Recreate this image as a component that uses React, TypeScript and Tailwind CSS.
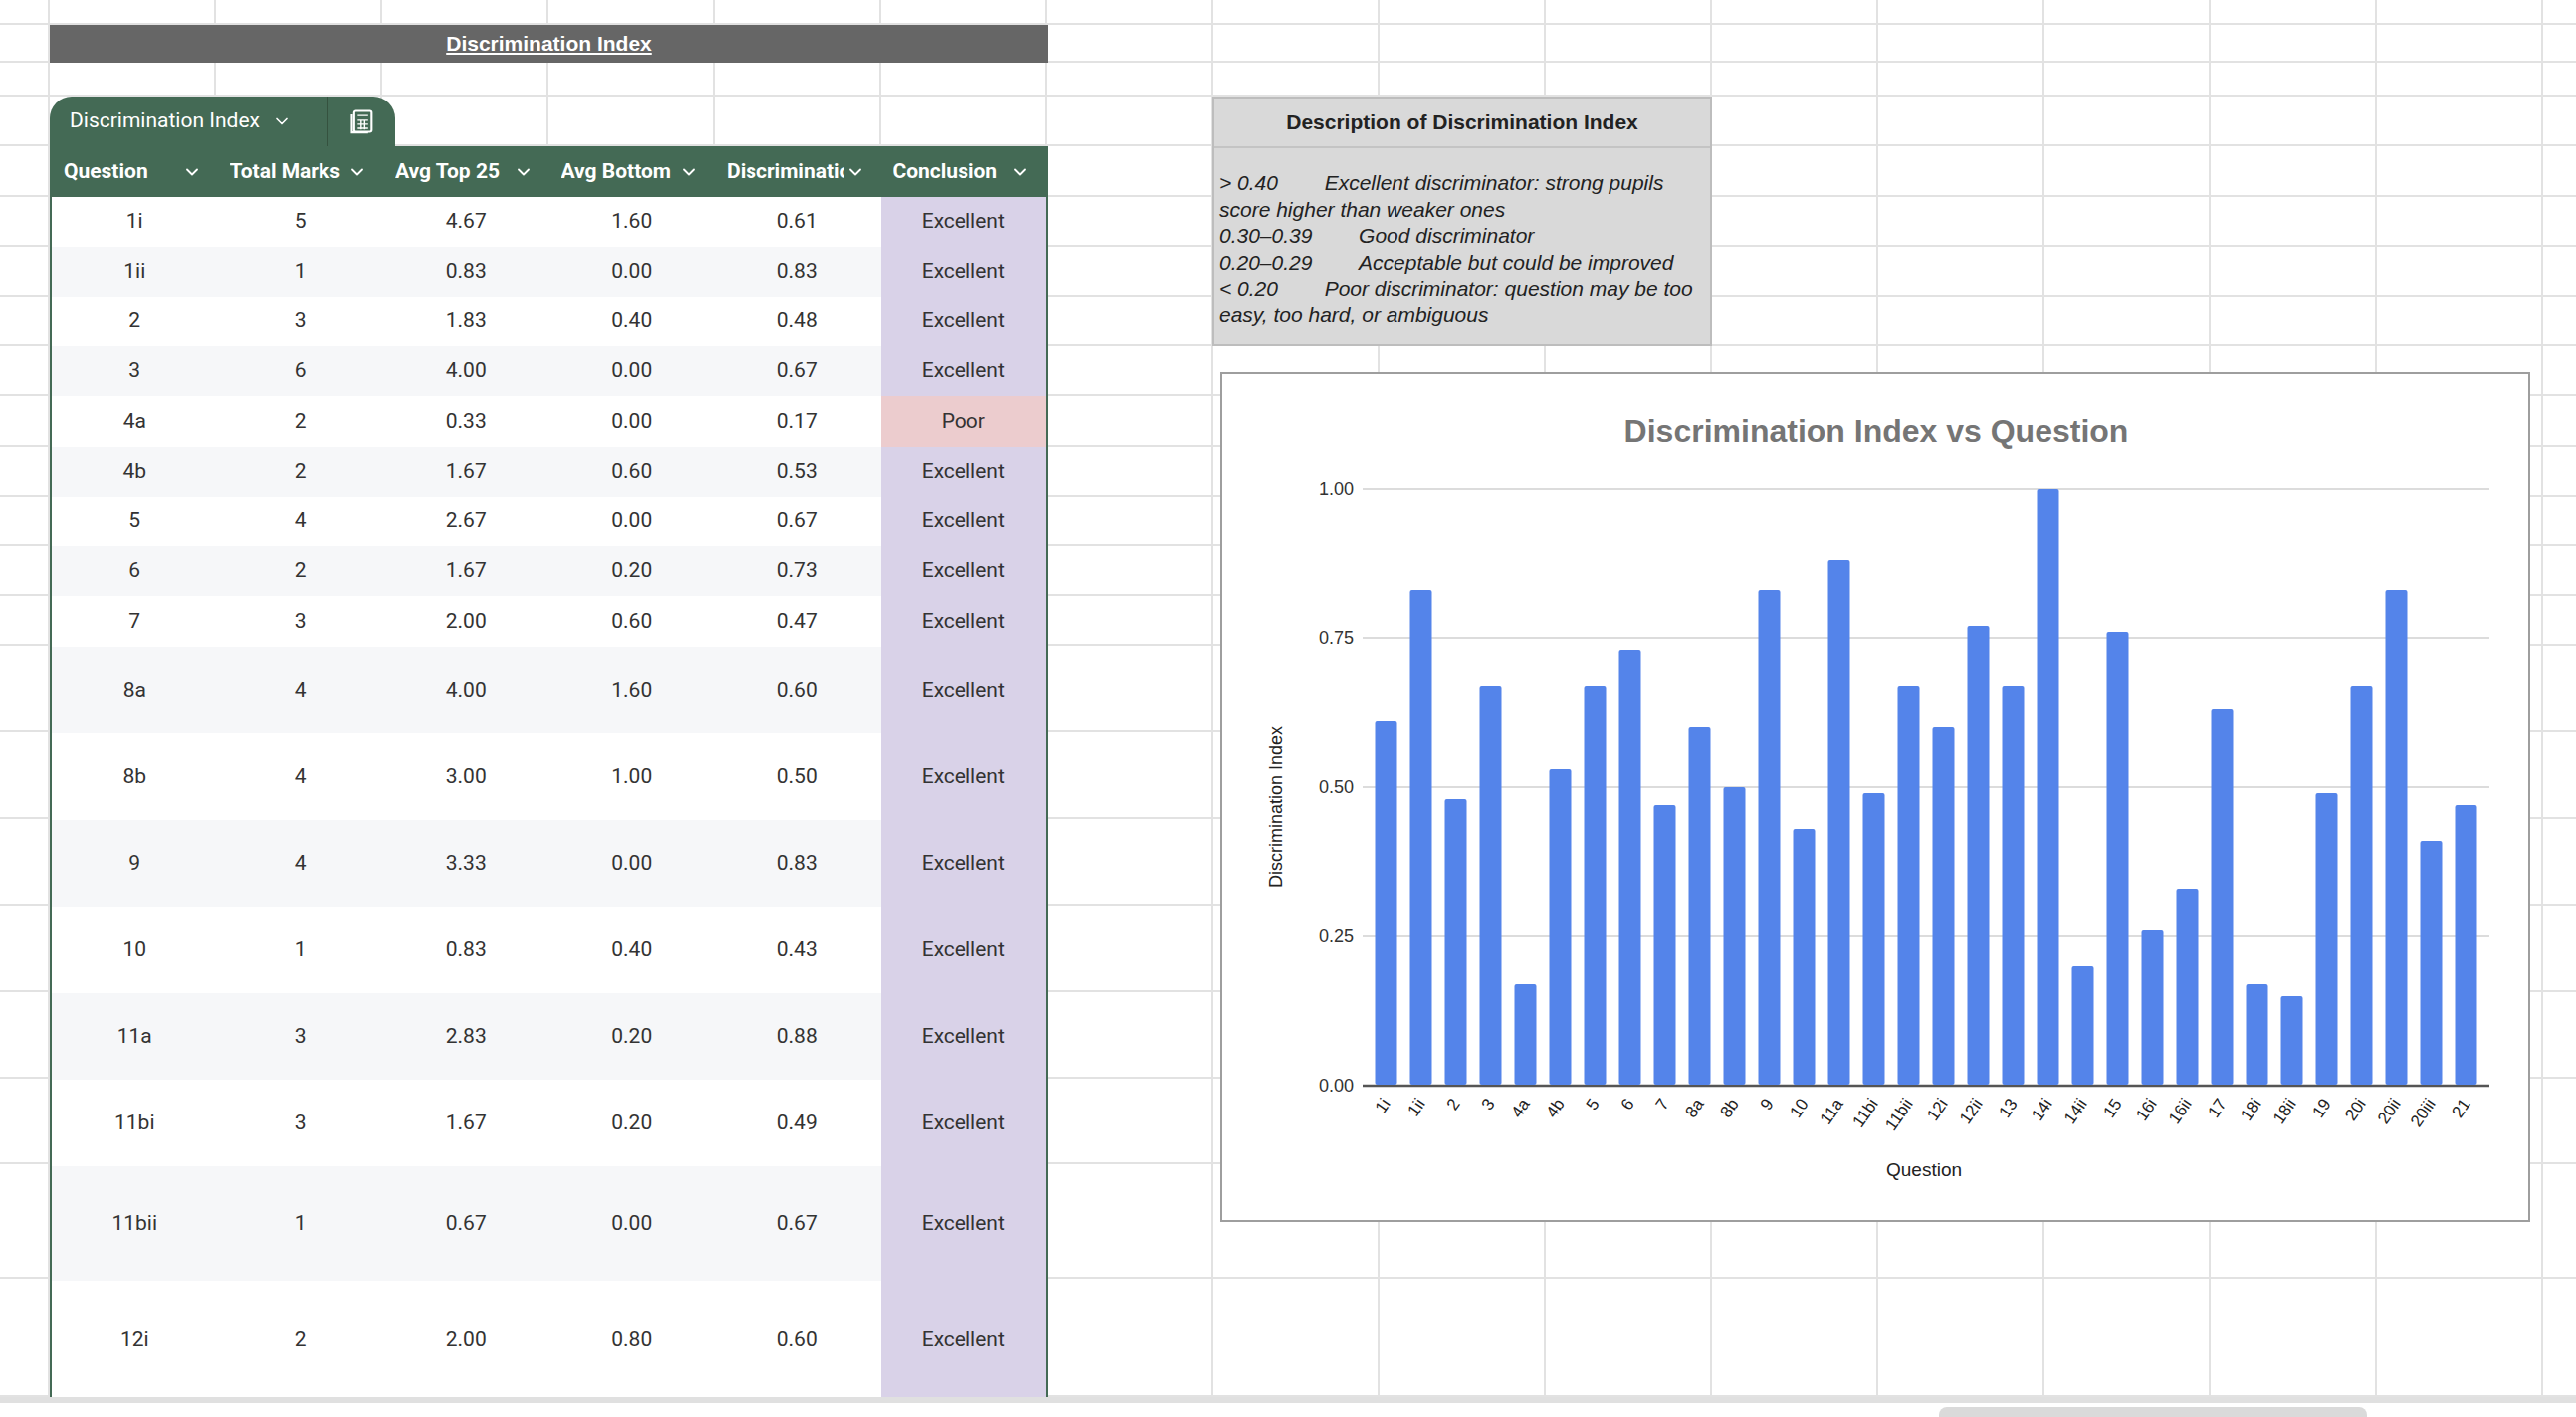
import { ChevronDown } from "lucide-react";

const ROW_TOPS = [0, 25, 63, 97, 147, 198, 248, 298, 348, 398, 449, 499, 549, 599, 649, 736, 823, 910, 997, 1084, 1170, 1285, 1404];

const rows = [
  ["1i", "5", "4.67", "1.60", "0.61", "Excellent", 50],
  ["1ii", "1", "0.83", "0.00", "0.83", "Excellent", 50],
  ["2", "3", "1.83", "0.40", "0.48", "Excellent", 50],
  ["3", "6", "4.00", "0.00", "0.67", "Excellent", 50],
  ["4a", "2", "0.33", "0.00", "0.17", "Poor", 51],
  ["4b", "2", "1.67", "0.60", "0.53", "Excellent", 50],
  ["5", "4", "2.67", "0.00", "0.67", "Excellent", 50],
  ["6", "2", "1.67", "0.20", "0.73", "Excellent", 50],
  ["7", "3", "2.00", "0.60", "0.47", "Excellent", 51],
  ["8a", "4", "4.00", "1.60", "0.60", "Excellent", 87],
  ["8b", "4", "3.00", "1.00", "0.50", "Excellent", 87],
  ["9", "4", "3.33", "0.00", "0.83", "Excellent", 87],
  ["10", "1", "0.83", "0.40", "0.43", "Excellent", 87],
  ["11a", "3", "2.83", "0.20", "0.88", "Excellent", 87],
  ["11bi", "3", "1.67", "0.20", "0.49", "Excellent", 87],
  ["11bii", "1", "0.67", "0.00", "0.67", "Excellent", 115],
  ["12i", "2", "2.00", "0.80", "0.60", "Excellent", 120],
] as const;

const headers = ["Question", "Total Marks", "Avg Top 25", "Avg Bottom", "Discrimination", "Conclusion"];

const chartData: [string, number][] = [
  ["1i", 0.61], ["1ii", 0.83], ["2", 0.48], ["3", 0.67], ["4a", 0.17], ["4b", 0.53], ["5", 0.67], ["6", 0.73],
  ["7", 0.47], ["8a", 0.6], ["8b", 0.5], ["9", 0.83], ["10", 0.43], ["11a", 0.88], ["11bi", 0.49], ["11bii", 0.67],
  ["12i", 0.6], ["12ii", 0.77], ["13", 0.67], ["14i", 1.0], ["14ii", 0.2], ["15", 0.76], ["16i", 0.26], ["16ii", 0.33],
  ["17", 0.63], ["18i", 0.17], ["18ii", 0.15], ["19", 0.49], ["20i", 0.67], ["20ii", 0.83], ["20iii", 0.41], ["21", 0.47],
];

function SheetGrid() {
  const heights = ROW_TOPS.slice(1).map((t, i) => t - ROW_TOPS[i]);
  return (
    <>
      <div className="absolute inset-0 flex flex-col">
        {heights.map((h, i) => (
          <div key={i} className="shrink-0 border-b-2 border-[#e2e2e2]" style={{ height: h }} />
        ))}
      </div>
      <div className="absolute left-0 right-0 top-0 h-[1404px] flex">
        <div className="w-[50px] shrink-0 border-r-2 border-[#e2e2e2]" />
        {Array.from({ length: 15 }).map((_, i) => (
          <div key={i} className="w-[167px] shrink-0 border-r-2 border-[#e2e2e2]" />
        ))}
      </div>
    </>
  );
}

function TableIcon() {
  return (
    <svg width="28" height="28" viewBox="0 0 24 24" fill="none" stroke="white" strokeWidth="1.8">
      <rect x="5" y="3" width="15" height="18" rx="1.5" />
      <path d="M3 6v15.5h14" />
      <path d="M8 7h9M8 11h9M8 14.5h9M8 18h9M11 11v8M14 11v8" strokeWidth="1.2" />
    </svg>
  );
}

function DataTable() {
  return (
    <div className="mt-[34px] w-[1003px]">
      <div className="flex h-[50px] w-[347px] rounded-t-[22px] bg-[#446a55] text-white">
        <div className="flex items-center gap-3 pl-5 w-[280px] border-r border-[#35523f] text-[21px]">
          Discrimination Index
          <ChevronDown className="h-5 w-5" strokeWidth={2} />
        </div>
        <div className="flex flex-1 items-center justify-center">
          <TableIcon />
        </div>
      </div>
      <div className="border-x-2 border-[#446a55]">
        <div className="grid grid-cols-6 h-[51px] bg-[#446a55] text-white font-bold text-[21px]">
          {headers.map((h) => (
            <div key={h} className="flex items-center justify-between pl-3 pr-4 overflow-hidden">
              <span className="whitespace-nowrap overflow-hidden max-w-[118px]">{h}</span>
              <ChevronDown className="h-5 w-5 shrink-0" strokeWidth={2.2} />
            </div>
          ))}
        </div>
        {rows.map((r, i) => (
          <div
            key={r[0]}
            className={`grid grid-cols-6 text-[21px] text-[#333] ${i % 2 ? "bg-[#f6f7f9]" : "bg-white"}`}
            style={{ height: r[6] }}
          >
            {r.slice(0, 5).map((c, j) => (
              <div key={j} className="flex items-center justify-center">{c}</div>
            ))}
            <div className={`flex items-center justify-center ${r[5] === "Poor" ? "bg-[#ecccce]" : "bg-[#d9d2e8]"}`}>{r[5]}</div>
          </div>
        ))}
      </div>
    </div>
  );
}

function Description() {
  return (
    <div className="w-[502px] h-[251px] bg-[#d9d9d9] border-2 border-[#bdbdbd] font-[family-name:Liberation_Sans,Arial,sans-serif] text-[#222]">
      <div className="h-[50px] flex items-center justify-center font-bold text-[21px] border-b-2 border-[#c4c4c4]">
        Description of Discrimination Index
      </div>
      <div className="pt-[22px] px-[5px] italic text-[21px] leading-[26.5px]">
        <div>&gt; 0.40&nbsp;&nbsp;&nbsp;&nbsp;&nbsp;&nbsp;&nbsp;&nbsp;Excellent discriminator: strong pupils score higher than weaker ones</div>
        <div>0.30–0.39&nbsp;&nbsp;&nbsp;&nbsp;&nbsp;&nbsp;&nbsp;&nbsp;Good discriminator</div>
        <div>0.20–0.29&nbsp;&nbsp;&nbsp;&nbsp;&nbsp;&nbsp;&nbsp;&nbsp;Acceptable but could be improved</div>
        <div>&lt; 0.20&nbsp;&nbsp;&nbsp;&nbsp;&nbsp;&nbsp;&nbsp;&nbsp;Poor discriminator: question may be too easy, too hard, or ambiguous</div>
      </div>
    </div>
  );
}

function Chart() {
  const x0 = 147, slot = 35, yTop = 115, yBase = 715, xr = 1273;
  return (
    <div className="mt-[26px] ml-[8px] w-[1316px] h-[854px] bg-white border-2 border-[#9e9e9e]">
      <svg width="1312" height="850" className="font-[family-name:Liberation_Sans,Arial,sans-serif]">
        <text x="657" y="68" textAnchor="middle" fontSize="32" fontWeight="bold" fill="#757575">
          Discrimination Index vs Question
        </text>
        {[0, 0.25, 0.5, 0.75, 1].map((v) => {
          const y = yBase - v * (yBase - yTop);
          return (
            <g key={v}>
              <line x1="141" x2={xr} y1={y} y2={y} stroke={v === 0 ? "#555" : "#dcdcdc"} strokeWidth={v === 0 ? 2.5 : 2} />
              <text x="132" y={y + 6} textAnchor="end" fontSize="18" fill="#333">{v.toFixed(2)}</text>
            </g>
          );
        })}
        {chartData.map(([q, v], i) => {
          const cx = x0 + slot * (i + 0.5);
          const h = v * (yBase - yTop);
          return (
            <g key={q}>
              <rect x={cx - 11} y={yBase - h} width="22" height={h - 1} rx="2" fill="#5484ea" />
              <text x={cx + 5} y={yBase + 18} textAnchor="end" fontSize="17" fill="#222" transform={`rotate(-55 ${cx + 5} ${yBase + 18})`}>
                {q}
              </text>
            </g>
          );
        })}
        <text x="705" y="806" textAnchor="middle" fontSize="19" fill="#222">Question</text>
        <text x="60" y="435" textAnchor="middle" fontSize="18" fill="#222" transform="rotate(-90 60 435)">
          Discrimination Index
        </text>
      </svg>
    </div>
  );
}

export default function App() {
  return (
    <div className="relative w-[2588px] h-[1424px] overflow-hidden bg-white font-[family-name:Roboto,Arial,sans-serif]">
      <SheetGrid />
      <div className="relative flex pl-[50px]">
        <div className="w-[1003px] pt-[25px]">
          <div className="h-[38px] bg-[#666666] flex items-center justify-center text-white font-bold text-[21px] underline underline-offset-2 font-[family-name:Liberation_Sans,Arial,sans-serif]">
            Discrimination Index
          </div>
          <DataTable />
        </div>
        <div className="ml-[165px] pt-[97px]">
          <Description />
          <Chart />
        </div>
      </div>
      <div className="absolute left-0 right-0 top-[1404px] h-[20px] bg-white border-t-[6px] border-[#e0e0e0]">
        <div className="absolute left-[1948px] top-[4px] w-[430px] h-[14px] rounded-t-[8px] bg-[#dadada]" />
      </div>
    </div>
  );
}
